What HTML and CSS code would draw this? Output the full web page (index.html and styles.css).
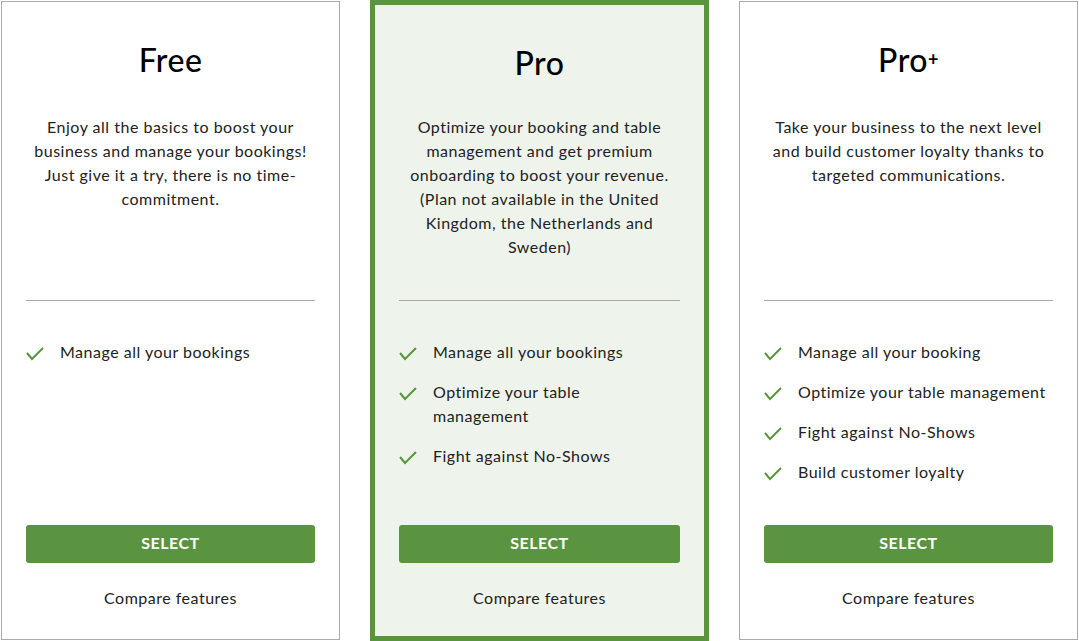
FILE: index.html
```html
<!DOCTYPE html>
<html lang="en">
<head>
    <meta charset="UTF-8">
    <meta name="viewport" content="width=device-width, initial-scale=1.0">
    <title>Plans</title>
    <link rel="stylesheet" href="styles.css">
</head>
<body>

<div class="plans">
    <div class="plan">
        <div class="plan-head">
            <h2 class="plan-title">Free</h2>
            <p class="plan-desc">Enjoy all the basics to boost your business and manage your bookings! Just give it a try, there is no time-commitment.</p>
        </div>
        <hr class="divider">
        <ul class="features">
            <li><svg class="check" viewBox="0 0 18 14"><polyline points="1,6 6,12 17,1"/></svg><span>Manage all your bookings</span></li>
        </ul>
        <button class="select-btn">SELECT</button>
        <a class="compare" href="#">Compare features</a>
    </div>

    <div class="plan featured">
        <div class="plan-head">
            <h2 class="plan-title">Pro</h2>
            <p class="plan-desc">Optimize your booking and table management and get premium onboarding to boost your revenue. (Plan not available in the United Kingdom, the Netherlands and Sweden)</p>
        </div>
        <hr class="divider">
        <ul class="features">
            <li><svg class="check" viewBox="0 0 18 14"><polyline points="1,6 6,12 17,1"/></svg><span>Manage all your bookings</span></li>
            <li><svg class="check" viewBox="0 0 18 14"><polyline points="1,6 6,12 17,1"/></svg><span>Optimize your table management</span></li>
            <li><svg class="check" viewBox="0 0 18 14"><polyline points="1,6 6,12 17,1"/></svg><span>Fight against No-Shows</span></li>
        </ul>
        <button class="select-btn">SELECT</button>
        <a class="compare" href="#">Compare features</a>
    </div>

    <div class="plan">
        <div class="plan-head">
            <h2 class="plan-title">Pro<sup class="plus">+</sup></h2>
            <p class="plan-desc">Take your business to the next level and build customer loyalty thanks to targeted communications.</p>
        </div>
        <hr class="divider">
        <ul class="features">
            <li><svg class="check" viewBox="0 0 18 14"><polyline points="1,6 6,12 17,1"/></svg><span>Manage all your booking</span></li>
            <li><svg class="check" viewBox="0 0 18 14"><polyline points="1,6 6,12 17,1"/></svg><span>Optimize your table management</span></li>
            <li><svg class="check" viewBox="0 0 18 14"><polyline points="1,6 6,12 17,1"/></svg><span>Fight against No-Shows</span></li>
            <li><svg class="check" viewBox="0 0 18 14"><polyline points="1,6 6,12 17,1"/></svg><span>Build customer loyalty</span></li>
        </ul>
        <button class="select-btn">SELECT</button>
        <a class="compare" href="#">Compare features</a>
    </div>
</div>

</body>
</html>
```

FILE: styles.css
```css
body {
    font-family: 'Lato', 'Open Sans', sans-serif;
    letter-spacing: 0.5px;
    background-color: #ffffff;
    color: #222222;
    margin: 0;
    padding: 0;
}

.plans {
    display: grid;
    grid-template-columns: repeat(3, 339px);
    gap: 30px;
    padding: 1px;
    height: 639px;
}

.plan {
    display: flex;
    flex-direction: column;
    border: 1px solid #aaaaaa;
    padding: 0 24px 29px;
    text-align: center;
}

/* highlighted plan */
.plan.featured {
    margin: -1px 0;
    border: 5px solid #5a9441;
    background-color: #eef4ec;
    padding-bottom: 26px;
}

.plan-head {
    height: 298px;
    padding-top: 40px;
    box-sizing: border-box;
}

.featured .plan-head {
    height: 295px;
}

.plan-title {
    margin: 0;
    font-size: 32px;
    line-height: 36px;
    font-weight: 500;
    color: #000000;
}

.plus {
    font-size: 18px;
    font-weight: 700;
    vertical-align: 6px;
    line-height: 0;
}

.plan-desc {
    margin: 37px 0 0;
    font-size: 16px;
    line-height: 24px;
    padding: 0 4px;
}

.featured .plan-desc {
    margin-top: 34px;
}

.divider {
    margin: 0;
    border: none;
    border-top: 1px solid #aaaaaa;
}

.features {
    list-style: none;
    margin: 39px 0 0;
    padding: 0;
    text-align: left;
    flex: 1;
}

.features li {
    display: flex;
    align-items: flex-start;
    gap: 16px;
    font-size: 16px;
    line-height: 24px;
    margin-bottom: 16px;
}

.check {
    width: 18px;
    height: 14px;
    flex-shrink: 0;
    margin-top: 7px;
    fill: none;
    stroke: #5a9441;
    stroke-width: 2;
}

.select-btn {
    height: 38px;
    padding: 0 0 3px;
    border: none;
    border-radius: 3px;
    background-color: #5a9441;
    color: #ffffff;
    font-family: inherit;
    font-size: 16px;
    font-weight: 700;
    letter-spacing: 0.5px;
    cursor: pointer;
}

.compare {
    margin-top: 23px;
    font-size: 16px;
    line-height: 24px;
    color: #222222;
    text-decoration: none;
}
```
